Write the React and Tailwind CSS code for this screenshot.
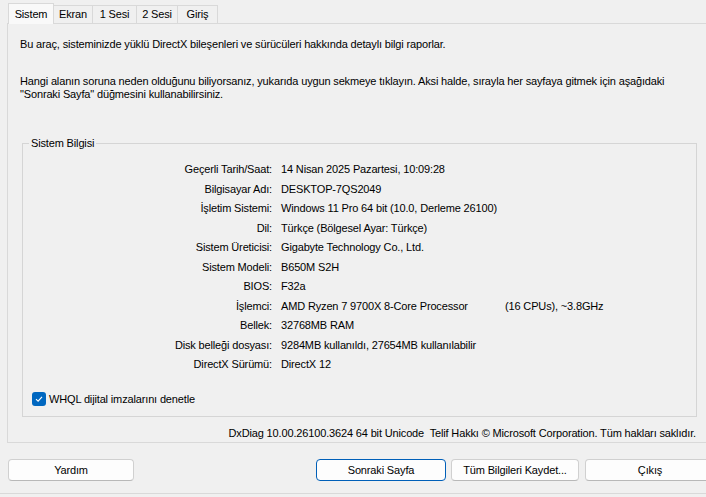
import React from "react";

const rows = [
  ["Geçerli Tarih/Saat:", "14 Nisan 2025 Pazartesi, 10:09:28"],
  ["Bilgisayar Adı:", "DESKTOP-7QS2049"],
  ["İşletim Sistemi:", "Windows 11 Pro 64 bit (10.0, Derleme 26100)"],
  ["Dil:", "Türkçe (Bölgesel Ayar: Türkçe)"],
  ["Sistem Üreticisi:", "Gigabyte Technology Co., Ltd."],
  ["Sistem Modeli:", "B650M S2H"],
  ["BIOS:", "F32a"],
  ["İşlemci:", "__cpu"],
  ["Bellek:", "32768MB RAM"],
  ["Disk belleği dosyası:", "9284MB kullanıldı, 27654MB kullanılabilir"],
  ["DirectX Sürümü:", "DirectX 12"],
];

const tabs = [
  ["Sistem", "w-[46px]"],
  ["Ekran", "w-[39px]"],
  ["1 Sesi", "w-[44px]"],
  ["2 Sesi", "w-[41px]"],
  ["Giriş", "w-[40px]"],
];

function Btn({ children, className = "", primary = false }) {
  return (
    <button
      className={
        "h-[22px] shrink-0 rounded-[4px] bg-[#fdfdfd] text-[11px] tracking-[-0.15px] text-black flex items-center justify-center border " +
        (primary ? "border-[#005fb8] " : "border-[#d0d0d0] border-b-[#b8b8b8] ") +
        className
      }
    >
      {children}
    </button>
  );
}

export default function App() {
  return (
    <div
      className="w-[706px] h-[497px] bg-[#f0f0f0] overflow-hidden flex flex-col text-[11px] tracking-[-0.15px] text-black"
      style={{ fontFamily: '"Liberation Sans", Arial, sans-serif' }}
    >
      {/* Tabs */}
      <div className="flex items-end pl-[8px] pt-[3px] h-[24px] relative z-10 shrink-0">
        {tabs.map(([t, w], i) =>
          i === 0 ? (
            <div
              key={t}
              className={"h-[21px] shrink-0 flex items-center justify-center bg-[#f9f9f9] border border-[#d9d9d9] border-b-0 " + w}
            >
              {t}
            </div>
          ) : (
            <div
              key={t}
              className={"h-[19px] shrink-0 flex items-center justify-center bg-[#f0f0f0] border border-[#d9d9d9] border-l-0 " + w}
            >
              {t}
            </div>
          )
        )}
        <div className="flex-1 border-b border-[#d9d9d9]" />
      </div>

      {/* Panel */}
      <div className="ml-[7px] w-[710px] h-[420px] shrink-0 mt-[-1px] border border-[#d9d9d9] bg-[#f0f0f0] flex flex-col pl-[12px] pt-[13px]">
        <p className="leading-[14px] whitespace-nowrap">
          Bu araç, sisteminizde yüklü DirectX bileşenleri ve sürücüleri hakkında detaylı bilgi raporlar.
        </p>
        <p className="leading-[13px] mt-[24px] whitespace-nowrap">
          Hangi alanın soruna neden olduğunu biliyorsanız, yukarıda uygun sekmeye tıklayın. Aksi halde, sırayla her sayfaya gitmek için aşağıdaki
          <br />
          "Sonraki Sayfa" düğmesini kullanabilirsiniz.
        </p>

        {/* Group box */}
        <div className="relative shrink-0 ml-[2px] mt-[42px] w-[675px] h-[274px] border border-[#d5d5d5] flex flex-col">
          <span className="absolute left-[6px] top-[-8px] px-[2px] bg-[#f0f0f0] leading-[14px]">
            Sistem Bilgisi
          </span>
          <div className="mt-[16px] grid grid-cols-[249px_1fr] gap-x-[9px]">
            {rows.map(([l, v]) => (
              <React.Fragment key={l}>
                <div className="text-right leading-[19.5px] whitespace-nowrap">{l}</div>
                <div className="leading-[19.5px] whitespace-nowrap">
                  {v === "__cpu" ? (
                    <span className="flex">
                      <span className="w-[224px]">AMD Ryzen 7 9700X 8-Core Processor</span>
                      <span>(16 CPUs), ~3.8GHz</span>
                    </span>
                  ) : (
                    v
                  )}
                </div>
              </React.Fragment>
            ))}
          </div>
          <div className="mt-[17px] ml-[9px] flex items-center gap-[3px]">
            <span className="w-[14px] h-[14px] rounded-[3px] bg-[#0067c0] flex items-center justify-center">
              <svg width="10" height="10" viewBox="0 0 10 10">
                <path d="M2 5.2 L4.1 7.2 L8 2.8" fill="none" stroke="white" strokeWidth="1.1" />
              </svg>
            </span>
            <span className="leading-[14px]">WHQL dijital imzalarını denetle</span>
          </div>
        </div>

        <div className="mt-[9px] w-[676px] text-right leading-[14px] whitespace-nowrap">
          DxDiag 10.00.26100.3624 64 bit Unicode&nbsp; Telif Hakkı © Microsoft Corporation. Tüm hakları saklıdır.
        </div>
      </div>

      {/* Buttons */}
      <div className="flex mt-[16px] pl-[8px] h-[22px] shrink-0">
        <Btn className="w-[126px]">Yardım</Btn>
        <Btn primary className="w-[130px] ml-[182px]">Sonraki Sayfa</Btn>
        <Btn className="w-[128px] ml-[5px]">Tüm Bilgileri Kaydet...</Btn>
        <Btn className="w-[130px] ml-[6px]">Çıkış</Btn>
      </div>
      <div className="mt-[12px] border-t border-[#d9d9d9] shrink-0" />
    </div>
  );
}
